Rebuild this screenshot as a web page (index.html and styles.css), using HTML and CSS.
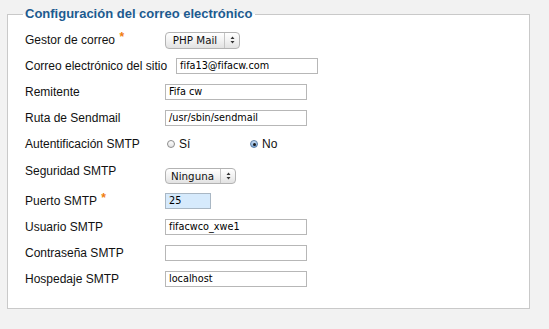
FILE: index.html
```html
<!DOCTYPE html>
<html lang="es">
<head>
<meta charset="utf-8">
<title>Configuración del correo electrónico</title>
<link rel="stylesheet" href="styles.css">
</head>
<body>
<fieldset class="panel">
  <legend class="panel-title">Configuración del correo electrónico</legend>

  <div class="row">
    <span class="lbl">Gestor de correo <span class="req">*</span></span>
    <span class="select select-mail">
      <span class="select-text">PHP Mail</span>
      <span class="select-arrows"><svg width="5" height="8" viewBox="0 0 5 8"><path d="M2.5 0.5 L4.5 3 L0.5 3 Z M0.5 5 L4.5 5 L2.5 7.5 Z" fill="#333"/></svg></span>
    </span>
  </div>

  <div class="row">
    <span class="lbl">Correo electrónico del sitio</span>
    <span class="field">fifa13@fifacw.com</span>
  </div>

  <div class="row">
    <span class="lbl">Remitente</span>
    <span class="field">Fifa cw</span>
  </div>

  <div class="row">
    <span class="lbl">Ruta de Sendmail</span>
    <span class="field">/usr/sbin/sendmail</span>
  </div>

  <div class="row">
    <span class="lbl">Autentificación SMTP</span>
    <span class="radios">
      <span class="radio-opt opt-yes"><span class="radio"></span>Sí</span>
      <span class="radio-opt"><span class="radio radio-on"></span>No</span>
    </span>
  </div>

  <div class="row row-tall">
    <span class="lbl lbl-high">Seguridad SMTP</span>
    <span class="select select-sec">
      <span class="select-text">Ninguna</span>
      <span class="select-arrows"><svg width="5" height="8" viewBox="0 0 5 8"><path d="M2.5 0.5 L4.5 3 L0.5 3 Z M0.5 5 L4.5 5 L2.5 7.5 Z" fill="#333"/></svg></span>
    </span>
  </div>

  <div class="row">
    <span class="lbl">Puerto SMTP <span class="req">*</span></span>
    <span class="field field-short">25</span>
  </div>

  <div class="row">
    <span class="lbl">Usuario SMTP</span>
    <span class="field">fifacwco_xwe1</span>
  </div>

  <div class="row">
    <span class="lbl">Contraseña SMTP</span>
    <span class="field"></span>
  </div>

  <div class="row">
    <span class="lbl">Hospedaje SMTP</span>
    <span class="field">localhost</span>
  </div>
</fieldset>
</body>
</html>
```

FILE: styles.css
```css
html, body {
  margin: 0;
  padding: 0;
  background: #f2f2f2;
}
body {
  padding-top: 6px;
  font-family: "Liberation Sans", Arial, sans-serif;
  font-size: 12px;
  color: #111;
}
.panel {
  margin: 0 19px 0 7px;
  padding: 5px 0 16px 17px;
  border: 1px solid #c9c9c9;
  background: #fff;
  min-width: 0;
}
.panel-title {
  margin-left: -2px;
  padding: 0 2px;
  font-size: 13px;
  line-height: 16px;
  font-weight: bold;
  color: #1d5b90;
}
.row {
  display: flex;
  align-items: center;
  height: 26px;
}
.row-tall {
  height: 31px;
}
.lbl {
  min-width: 131px;
  padding-right: 9px;
  line-height: 14px;
  white-space: nowrap;
}
.lbl-high {
  margin-bottom: 3px;
}
.req {
  color: #f07d0c;
  font-weight: bold;
  position: relative;
  top: -3px;
  margin-left: 1px;
}
.field {
  box-sizing: border-box;
  display: block;
  width: 142px;
  height: 16px;
  border: 1px solid #b7b7b7;
  background: #fff;
  padding: 0 3px;
  font-family: "DejaVu Sans", sans-serif;
  font-size: 9.7px;
  line-height: 14px;
  color: #000;
  white-space: nowrap;
  overflow: hidden;
}
.field-short {
  width: 46px;
  background: #d6eafc;
  border-color: #a9b7c4;
}
.select {
  box-sizing: border-box;
  display: flex;
  height: 17px;
  border: 1px solid #b3b3b3;
  border-radius: 4px;
  background: linear-gradient(#ffffff, #f2f2f2 50%, #e2e2e2);
  font-family: "DejaVu Sans", sans-serif;
  font-size: 10.3px;
  line-height: 15px;
  color: #111;
}
.select-mail { width: 75px; }
.select-sec { width: 71px; margin-top: 6px; height: 16px; line-height: 14px; }
.select-text {
  flex: 1;
  text-align: center;
  border-right: 1px solid #c4c4c4;
}
.select-sec .select-text {
  text-align: left;
  padding-left: 5px;
}
.select-arrows {
  width: 14px;
  display: flex;
  align-items: center;
  justify-content: center;
}
.radios {
  display: flex;
  align-items: center;
}
.radio-opt {
  display: flex;
  align-items: center;
  line-height: 14px;
}
.opt-yes {
  width: 83px;
  margin-left: 2px;
}
.radio {
  box-sizing: border-box;
  width: 8px;
  height: 8px;
  border-radius: 50%;
  border: 1px solid #8c8c8c;
  background: linear-gradient(#fdfdfd, #e4e4e4);
  margin-right: 4px;
  position: relative;
}
.radio-on {
  border-color: #5c7fa8;
  background: linear-gradient(#c9def4, #7ea9d9);
}
.radio-on::after {
  content: "";
  position: absolute;
  left: 1.5px;
  top: 1.5px;
  width: 3px;
  height: 3px;
  border-radius: 50%;
  background: #1a1a1a;
}
```
